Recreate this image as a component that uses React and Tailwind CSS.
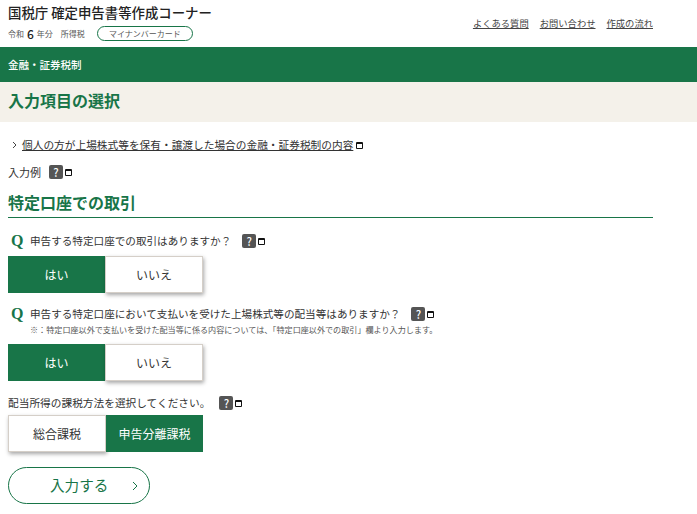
import React from 'react'

function Help() {
    return (
        <span className="inline-flex items-center gap-[2px]">
            <span className="flex h-[14px] w-[14px] items-center justify-center rounded-[2px] bg-[#555555] text-[11px] font-medium leading-none text-white">?</span>
            <WinIcon />
        </span>
    )
}

function WinIcon() {
    return <span className="block h-[7px] w-[7px] rounded-[1px] border border-t-2 border-[#111111]"></span>
}

function Question({ children }) {
    return (
        <div className="flex h-[18px] items-center pl-[3px]">
            <span className="mr-[7px] w-[12px] font-['Liberation_Serif'] text-[16px] font-bold leading-none text-[#17754a]">Q</span>
            <span className="mr-[11px] text-[10.6px] text-[#333333]">{children}</span>
            <Help />
        </div>
    )
}

function Choice({ left, right, active }) {
    const on = "flex h-full w-[97px] items-center justify-center bg-[#187548] text-white"
    const off = "flex h-full w-[98px] items-center justify-center border border-[#d5cfc8] bg-white text-[#333333] shadow-[1px_2px_4px_rgba(0,0,0,0.35)]"
    return (
        <div className="flex h-[37px] w-[195px] text-[12px]">
            <div className={active === 0 ? on : off}>{left}</div>
            <div className={active === 1 ? on : off}>{right}</div>
        </div>
    )
}

export default function App() {
    return (
        <div className="h-[514px] w-[697px] overflow-hidden bg-white font-['Noto_Sans_CJK_JP',sans-serif] text-[#333333]">
            <header className="flex h-[47px] justify-between pl-2 pr-[44px]">
                <div>
                    <h1 className="mt-[3px] text-[13.4px] font-medium leading-[18px] text-[#222222]">国税庁 確定申告書等作成コーナー</h1>
                    <div className="mt-[5px] flex h-[15px] items-center text-[8px] text-[#555555]">
                        <span>令和</span>
                        <span className="mx-[3px] text-[12px] font-medium text-[#222222]">6</span>
                        <span>年分</span>
                        <span className="ml-[8px]">所得税</span>
                        <span className="ml-[12px] flex h-[15px] w-[96px] items-center justify-center rounded-full border border-[#187548] text-[8px]">マイナンバーカード</span>
                    </div>
                </div>
                <nav className="mt-[16px] flex h-[15px] gap-[11px] text-[9.3px] leading-[14px] text-[#444444]">
                    <a className="underline">よくある質問</a>
                    <a className="underline">お問い合わせ</a>
                    <a className="underline">作成の流れ</a>
                </nav>
            </header>

            <div className="flex h-[35px] items-center bg-[#187548] pl-2 text-[10.5px] font-medium text-white">金融・証券税制</div>

            <div className="h-[40px] bg-[#f4f1ea] pl-2 text-[16px] font-bold leading-[37px] text-[#187548]">入力項目の選択</div>

            <main className="w-[653px] pl-2">
                <div className="mt-[14px] flex h-[18px] items-center pl-[4px] text-[10.7px]">
                    <svg width="6" height="8" viewBox="0 0 6 8" className="mr-[4px]" fill="none" stroke="#444444" strokeWidth="1"><path d="M1 1l3 3-3 3" /></svg>
                    <a className="underline">個人の方が上場株式等を保有・譲渡した場合の金融・証券税制の内容</a>
                    <span className="ml-[3px]"><WinIcon /></span>
                </div>
                <div className="mt-[9px] flex h-[18px] items-center text-[11px]">
                    <span className="mr-[8px]">入力例</span>
                    <Help />
                </div>
                <h2 className="mt-[3px] h-[34px] border-b border-[#187548] pt-[4px] text-[16px] font-bold leading-[28px] text-[#187548]">特定口座での取引</h2>

                <div className="mt-[14px]"><Question>申告する特定口座での取引はありますか？</Question></div>
                <div className="mt-[6px]"><Choice left="はい" right="いいえ" active={0} /></div>

                <div className="mt-[12px]"><Question>申告する特定口座において支払いを受けた上場株式等の配当等はありますか？</Question></div>
                <p className="mt-[1px] h-[11px] pl-[22px] text-[8.1px] leading-[12px] text-[#555555]">※：特定口座以外で支払いを受けた配当等に係る内容については、「特定口座以外での取引」欄より入力します。</p>
                <div className="mt-[9px]"><Choice left="はい" right="いいえ" active={0} /></div>

                <div className="mt-[13px] flex h-[18px] items-center text-[10.7px]">
                    <span className="mr-[9px]">配当所得の課税方法を選択してください。</span>
                    <Help />
                </div>
                <div className="mt-[3px]"><Choice left="総合課税" right="申告分離課税" active={1} /></div>

                <button className="relative mt-[15px] flex h-[37px] w-[142px] items-center rounded-full border border-[#187548] pb-[2px] pl-[41px] text-[14.6px] text-[#187548]">
                    入力する
                    <svg width="6" height="10" viewBox="0 0 6 10" className="absolute right-[11px] top-[13px]" fill="none" stroke="#187548" strokeWidth="1"><path d="M1 1l4 4-4 4" /></svg>
                </button>
            </main>
        </div>
    )
}
